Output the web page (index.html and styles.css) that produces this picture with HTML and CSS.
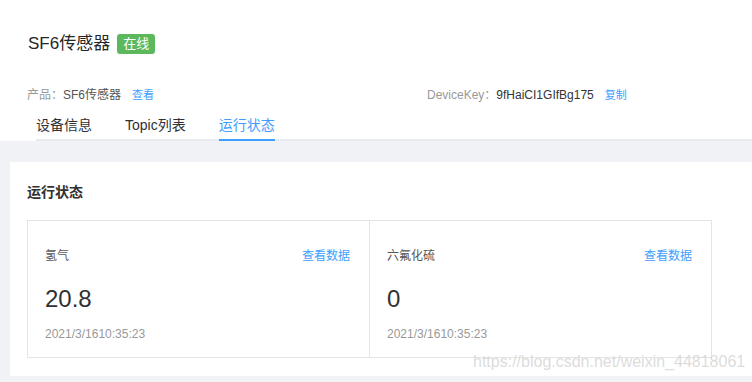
FILE: index.html
```html
<!DOCTYPE html>
<html lang="zh-CN">
<head>
<meta charset="utf-8">
<title>SF6传感器</title>
<link rel="stylesheet" href="styles.css">
</head>
<body>
<div class="header">
  <div class="title-row">
    <h1 class="title">SF6传感器</h1>
    <span class="badge">在线</span>
  </div>
  <div class="info-row">
    <div class="info-item product">
      <span class="info-label">产品：</span><span class="info-value">SF6传感器</span><a class="link">查看</a>
    </div>
    <div class="info-item">
      <span class="info-label">DeviceKey：</span><span class="info-value dark">9fHaiCI1GIfBg175</span><a class="link">复制</a>
    </div>
  </div>
  <div class="tabs">
    <div class="tab">设备信息</div>
    <div class="tab">Topic列表</div>
    <div class="tab active">运行状态</div>
  </div>
</div>
<div class="main">
  <div class="panel">
    <h2 class="panel-title">运行状态</h2>
    <div class="cards">
      <div class="card">
        <div class="card-head"><span class="card-label">氢气</span><a class="link">查看数据</a></div>
        <div class="card-value">20.8</div>
        <div class="card-time">2021/3/1610:35:23</div>
      </div>
      <div class="card">
        <div class="card-head"><span class="card-label">六氟化硫</span><a class="link">查看数据</a></div>
        <div class="card-value">0</div>
        <div class="card-time">2021/3/1610:35:23</div>
      </div>
    </div>
  </div>
</div>
<div class="watermark">https://blog.csdn.net/weixin_44818061</div>
</body>
</html>
```

FILE: styles.css
```css
html, body {
  margin: 0;
  padding: 0;
}
body {
  font-family: "Liberation Sans", "Noto Sans CJK SC", sans-serif;
  background: #f0f2f5;
  color: #303133;
  width: 752px;
  height: 382px;
  overflow: hidden;
  position: relative;
}
.header {
  background: #fff;
  padding-top: 32px;
}
.title-row {
  display: flex;
  align-items: center;
  padding-left: 28px;
  height: 24px;
}
.title {
  margin: 0;
  font-size: 17px;
  font-weight: normal;
  line-height: 24px;
  color: #262626;
}
.badge {
  margin-left: 7px;
  width: 38px;
  height: 20px;
  line-height: 20px;
  text-align: center;
  background: #5cb85c;
  color: #fff;
  font-size: 13px;
  border-radius: 3px;
}
.info-row {
  display: flex;
  margin-top: 30px;
  padding-left: 27px;
  font-size: 12px;
  line-height: 18px;
}
.info-item.product {
  width: 400px;
}
.info-label {
  color: #999;
}
.info-value {
  color: #555;
}
.info-value.dark {
  color: #333;
}
.link {
  color: #409eff;
  margin-left: 11px;
  font-size: 11px;
  cursor: pointer;
}
.tabs {
  display: flex;
  margin-top: 11px;
  margin-left: 36px;
  border-bottom: 2px solid #e8eaed;
}
.tab {
  font-size: 14px;
  line-height: 20px;
  padding-bottom: 4px;
  border-bottom: 2px solid transparent;
  margin-bottom: -2px;
  margin-right: 33px;
  color: #303133;
}
.tab.active {
  color: #409eff;
  border-bottom-color: #409eff;
}
.main {
  padding: 21px 0 6px 10px;
}
.panel {
  background: #fff;
  padding: 20px 0 18px 17px;
}
.panel-title {
  margin: 0 0 18px;
  font-size: 14px;
  font-weight: bold;
  line-height: 20px;
  color: #303133;
}
.cards {
  display: flex;
  width: 683px;
  border: 1px solid #e4e4e4;
}
.card {
  flex: 1;
  padding: 26px 19px 14px 17px;
}
.card + .card {
  border-left: 1px solid #e4e4e4;
}
.card-head {
  display: flex;
  justify-content: space-between;
  line-height: 18px;
  font-size: 12px;
}
.card-head .link {
  font-size: 12px;
}
.card-label {
  color: #555;
}
.card-value {
  margin-top: 18px;
  font-size: 24px;
  line-height: 32px;
  color: #303133;
}
.card-time {
  margin-top: 10px;
  font-size: 12px;
  line-height: 18px;
  color: #999;
}
.watermark {
  position: absolute;
  left: 473px;
  top: 352px;
  font-size: 16px;
  line-height: 20px;
  color: rgba(190, 190, 190, 0.55);
  text-shadow: 0 0 1px rgba(255, 255, 255, 0.8);
  pointer-events: none;
}
```
